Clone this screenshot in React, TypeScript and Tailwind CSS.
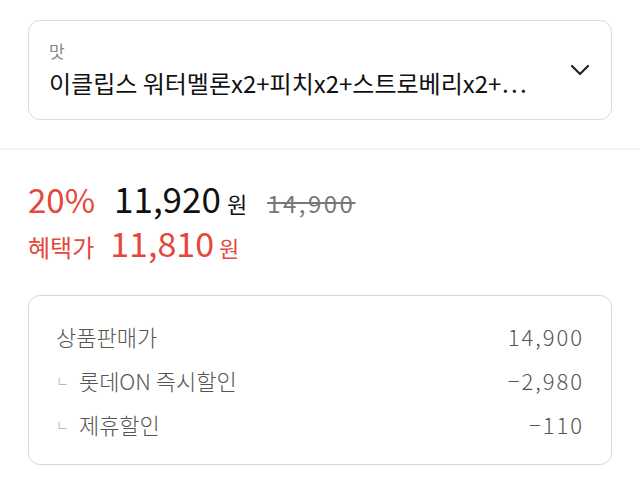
import { ChevronDown } from "lucide-react";

const FONT = { fontFamily: '"Noto Sans CJK KR", "Noto Sans", sans-serif' };

const rows = [
  { label: "상품판매가", value: "14,900", sub: false },
  { label: "롯데ON 즉시할인", value: "−2,980", sub: true },
  { label: "제휴할인", value: "−110", sub: true },
];

export default function App() {
  return (
    <main className="min-h-screen w-[640px] bg-white text-[#111]" style={FONT}>
      <div className="px-7 pt-5 pb-7">
        <button className="flex h-[100px] w-full items-center rounded-xl border border-[#dcdcdc] bg-white pl-5 pr-[15px] text-left">
          <div className="min-w-0 flex-1">
            <p className="text-[17px] leading-[22px] text-[#888]">맛</p>
            <p className="mt-[4px] whitespace-nowrap text-[24px] leading-[34px] text-[#111]">이클립스 워터멜론x2+피치x2+스트로베리x2+…</p>
          </div>
          <ChevronDown className="ml-2 h-8 w-8 shrink-0 text-[#222]" strokeWidth={1.6} />
        </button>
      </div>

      <div className="h-[2px] bg-[#f4f4f4]" />

      <section className="px-7 pt-[26px]">
        <div className="flex items-baseline">
          <span className="text-[33px] leading-[44px] text-[#e5473b]">20%</span>
          <span className="ml-[19px] text-[35px] leading-[44px] text-[#111]">11,920</span>
          <span className="ml-[6px] text-[22px] text-[#111]">원</span>
          <span className="ml-[20px] text-[24px] tracking-[2.5px] text-[#777] line-through decoration-[#777]">14,900</span>
        </div>
        <div className="mt-[2px] flex items-baseline">
          <span className="text-[24px] leading-[40px] text-[#e5473b]">혜택가</span>
          <span className="ml-[16px] text-[34px] leading-[40px] text-[#e5473b]">11,810</span>
          <span className="ml-[5px] text-[22px] text-[#e5473b]">원</span>
        </div>

        <div className="mt-[28px] rounded-xl border border-[#d6d6d6] px-[27px] py-[18px]">
          {rows.map((row) => (
            <div key={row.label} className="flex h-[44px] items-center justify-between text-[22px] font-light text-[#555]">
              <div className="flex items-center">
                {row.sub ? <span className="mr-[10px] text-[14px] text-[#aaa]">ㄴ</span> : null}
                <span>{row.label}</span>
              </div>
              <span className="tracking-[2px]">{row.value}</span>
            </div>
          ))}
        </div>
      </section>
    </main>
  );
}
